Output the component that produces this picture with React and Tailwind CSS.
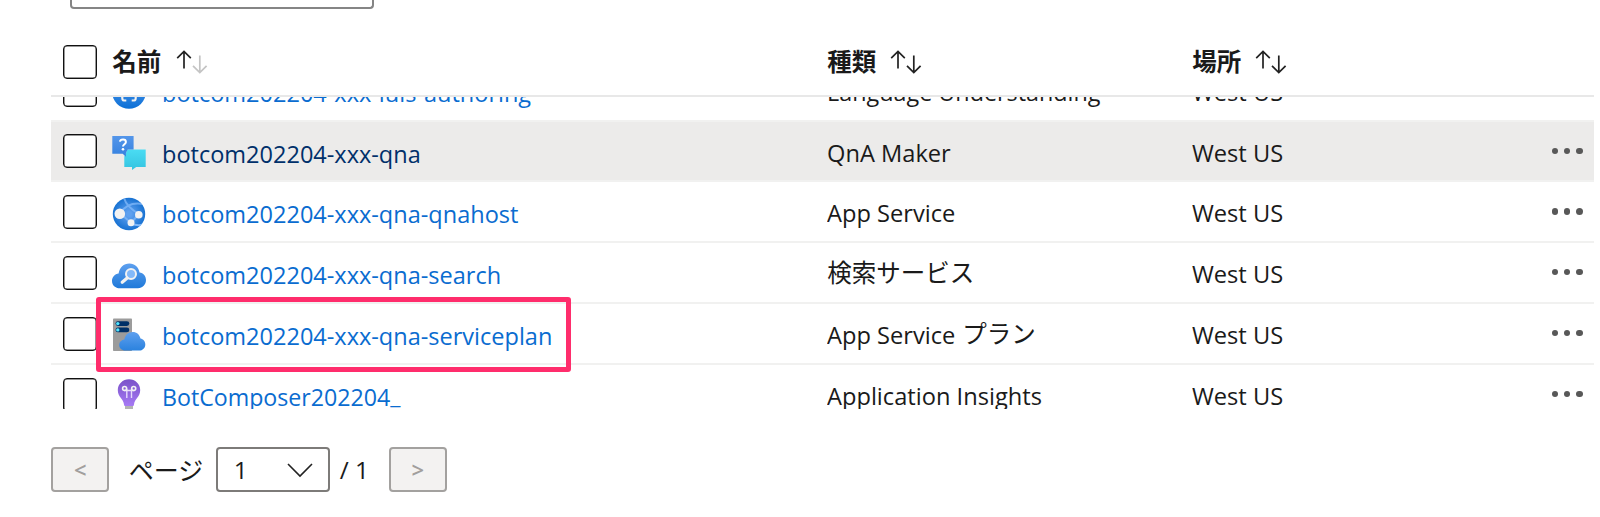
function QnaIcon() {
  return (
    <svg width="34" height="35" viewBox="0 0 34 35">
      <defs>
        <linearGradient id="qa" x1="0" y1="0" x2="0" y2="1"><stop offset="0" stopColor="#5496ea" /><stop offset="1" stopColor="#3581df" /></linearGradient>
        <linearGradient id="qb" x1="0" y1="0" x2="0" y2="1"><stop offset="0" stopColor="#4adcf3" /><stop offset="1" stopColor="#35c3e0" /></linearGradient>
      </defs>
      <path d="M15.500 13.500H33.700v17.600h-9.500L20 34v-2.900h-7.700V20.500z" fill="url(#qb)" />
      <path d="M.3 0h21.300v13.600h-5.900l-1.800 3.400v3.700l-3.200-3H.3z" fill="url(#qa)" />
      <path d="M7.900 5.700c.3-1.700 1.600-2.200 3.100-2.200 1.700 0 2.900.9 2.900 2.400 0 2.300-2.900 2.400-2.900 4.700" fill="none" stroke="#fff" strokeWidth="2" />
      <circle cx="11" cy="13.300" r="1.300" fill="#fff" />
    </svg>
  );
}

function BracesIcon() {
  return (
    <svg width="34" height="34" viewBox="0 0 34 34">
      <defs><linearGradient id="br" x1="0" y1="0" x2="0" y2="1"><stop offset="0" stopColor="#5ea0ef" /><stop offset="1" stopColor="#0b6fd6" /></linearGradient></defs>
      <circle cx="17" cy="17" r="16.800" fill="url(#br)" />
      <path d="M13.800 11c-3 0-3.500 1.500-3.500 4s0 4-2 4c2 0 2 1.500 2 4s.5 2.500 4 2.500M20.200 11c3 0 3.500 1.500 3.500 4s0 4 2 4c-2 0-2 1.500-2 4s-.5 2.500-4 2.500" fill="none" stroke="#f2f2f2" strokeWidth="2.200" />
    </svg>
  );
}

function GlobeIcon() {
  return (
    <svg width="34" height="34" viewBox="0 0 34 34">
      <defs>
        <radialGradient id="gl" cx=".5" cy=".5" r=".5"><stop offset=".15" stopColor="#5ea0ef" /><stop offset="1" stopColor="#1872d2" /></radialGradient>
        <clipPath id="gc"><circle cx="17" cy="17" r="16.200" /></clipPath>
      </defs>
      <circle cx="17" cy="17" r="16.200" fill="url(#gl)" />
      <g clipPath="url(#gc)" fill="none" stroke="#83b9f9" strokeWidth="2">
        <path d="M8 16C13 9 21 5 31 7M12 1c2 7 8 12 15 16M8 16l11 10M19 26l8-9" strokeOpacity=".75" />
        <path d="M19 26.500c5 2 9 2 12 1" />
      </g>
      <circle cx="7.800" cy="16.700" r="5.300" fill="#f2f2f2" />
      <circle cx="26.800" cy="17.700" r="3.800" fill="#f2f2f2" />
      <circle cx="19" cy="25.800" r="3.500" fill="#f2f2f2" />
    </svg>
  );
}

function CloudSearchIcon() {
  return (
    <svg width="34" height="34" viewBox="0 0 34 34">
      <defs><linearGradient id="cs" x1="0" y1="0" x2="0" y2="1"><stop offset="0" stopColor="#5ea0ef" /><stop offset="1" stopColor="#1f79d9" /></linearGradient></defs>
      <path d="M8 30.300C3.300 30.300 0 27.300 0 23c0-3.900 2.900-7 6.600-7.400C7.400 9.500 11.700 5.500 17.400 5.500c5.300 0 9.200 3.500 10.100 8.900 3.900.4 6.500 3.700 6.500 7.700 0 4.600-3.500 8.200-8 8.200z" fill="url(#cs)" />
      <circle cx="19" cy="16" r="5" fill="#83b9f9" stroke="#f2f2f2" strokeWidth="2" />
      <path d="M15.200 20l-5 4.300" stroke="#f2f2f2" strokeWidth="3.200" strokeLinecap="round" />
    </svg>
  );
}

function PlanIcon() {
  return (
    <svg width="34" height="34" viewBox="0 0 34 34">
      <defs><linearGradient id="pl" x1="0" y1="0" x2="0" y2="1"><stop offset="0" stopColor="#5ea0ef" /><stop offset="1" stopColor="#2b82de" /></linearGradient></defs>
      <rect x="1" y=".5" width="19" height="32.500" rx=".8" fill="#9c9c9c" />
      <rect x="3.500" y="3.200" width="13.800" height="4.800" rx="2.400" fill="#003067" />
      <rect x="3.500" y="9.500" width="13.800" height="4.800" rx="2.400" fill="#003067" />
      <circle cx="5.800" cy="5.600" r="1.700" fill="#50e6ff" />
      <circle cx="5.800" cy="11.900" r="1.700" fill="#50e6ff" />
      <path d="M13.300 32.500c-3.500 0-6.100-2.400-6.100-5.500 0-3 2.200-5.200 5.200-5.600.7-4.400 4-7.400 8.300-7.400 4 0 7 2.600 7.800 6.600 2.700.4 4.800 2.800 4.800 5.800 0 3.400-2.700 6.100-6.200 6.100z" fill="url(#pl)" />
    </svg>
  );
}

function BulbIcon() {
  return (
    <svg width="34" height="34" viewBox="0 0 34 34">
      <defs><linearGradient id="bu" x1="0" y1="0" x2="0" y2="1"><stop offset="0" stopColor="#7a52c8" /><stop offset="1" stopColor="#a67af4" /></linearGradient></defs>
      <path d="M17 .2C10.700.2 5.800 5 5.800 11c0 7.500 5.700 8.500 6.200 14.500.1 1.200.6 1.500 1.600 1.500h6.800c1 0 1.500-.3 1.600-1.500.5-6 6.200-7 6.200-14.500C28.200 5 23.300.2 17 .2z" fill="url(#bu)" />
      <path d="M14.800 19V9.800M19.500 19V9.800M12 11.500h10.500" stroke="#e6dafc" strokeWidth="1.400" fill="none" />
      <circle cx="12.600" cy="9.500" r="2" fill="none" stroke="#f2f2f2" strokeWidth="1.600" />
      <circle cx="21.700" cy="9.500" r="2" fill="none" stroke="#f2f2f2" strokeWidth="1.600" />
      <path d="M13 27h8v4l-2 3h-4l-2-3z" fill="#b3b3b3" />
    </svg>
  );
}

function Sort({ dim }) {
  return (
    <svg className={`mt-[5px] shrink-0 ${dim ? "ml-[15px]" : "ml-[14px]"}`} width="32" height="26" viewBox="0 0 32 26" fill="none" strokeWidth="1.700">
      <path d="M8 19.500V2.500M1.200 9.200L8 2.400l6.800 6.800" stroke="#222" />
      <path d="M23.800 6.500v17M17 16.800l6.800 6.800 6.800-6.800" stroke={dim ? "#c4c4c4" : "#222"} />
    </svg>
  );
}

function Checkbox() {
  return <span className="block size-[34px] shrink-0 rounded-[4px] border-[1.5px] border-[#111] bg-white shadow-[inset_0_0_0_0.5px_#333]" />;
}

const rows = [
  { name: "botcom202204-xxx-luis-authoring", type: "Language Understanding", icon: <BracesIcon />, typeScale: "scale-x-[0.953]" },
  { name: "botcom202204-xxx-qna", type: "QnA Maker", icon: <QnaIcon />, dots: true, active: true },
  { name: "botcom202204-xxx-qna-qnahost", type: "App Service", icon: <GlobeIcon />, dots: true },
  { name: "botcom202204-xxx-qna-search", type: "検索サービス", jp: true, icon: <CloudSearchIcon />, dots: true },
  { name: "botcom202204-xxx-qna-serviceplan", type: "App Service", suffix: "プラン", icon: <PlanIcon />, dots: true },
  { name: "BotComposer202204", tail: "_", nameScale: "scale-x-[0.946]", type: "Application Insights", icon: <BulbIcon />, dots: true },
];

const GRID = "grid grid-cols-[49px_50px_665px_365px_1fr_56px]";

function Row({ row }) {
  return (
    <div className={`${GRID} h-[60.85px] border-b-2 border-[#f1f1f0] pl-[12px] ${row.active ? "bg-[#ecebea]" : "bg-white"}`}>
      <div className="pt-[12.6px]"><Checkbox /></div>
      <div className="pt-[14.4px]">{row.icon}</div>
      <div className={`pt-[14px] leading-[36px] ${row.active ? "text-[#00306a]" : "text-[#0a6cd0]"}`}>
        <span className={`inline-block origin-left whitespace-nowrap ${row.nameScale || "scale-x-[0.96]"}`}>
          {row.name}
          {row.tail && <span className="relative -top-[2px]">{row.tail}</span>}
        </span>
      </div>
      <div className="flex pt-[13px] leading-[36px]">
        {row.jp ? (
          <span className="-mt-px whitespace-nowrap">{row.type}</span>
        ) : (
          <span className={`inline-block origin-left whitespace-nowrap ${row.typeScale || "scale-x-[0.965]"}`}>{row.type}</span>
        )}
        {row.suffix && <span className="-mt-px ml-[2px]">{row.suffix}</span>}
      </div>
      <div className="pt-[13px] leading-[36px]">
        <span className="inline-block origin-left scale-x-[0.965] whitespace-nowrap">West US</span>
      </div>
      <div className="flex gap-[6px] pt-[26px] pl-[14px]">
        {row.dots && [0, 1, 2].map((d) => <span key={d} className="size-[6.2px] rounded-full bg-[#585858]" />)}
      </div>
    </div>
  );
}

function Heading({ children, dim }) {
  return (
    <div className="-mt-px flex">
      <span className="leading-[36px] font-semibold">{children}</span>
      <Sort dim={dim} />
    </div>
  );
}

function PageButton({ children }) {
  return (
    <button className="flex h-[45px] w-[58px] items-center justify-center rounded-[4px] border-2 border-[#a3a19f] bg-[#f3f2f1] pb-px text-[22px] font-semibold text-[#a19f9d]">
      {children}
    </button>
  );
}

export default function App() {
  return (
    <div className="relative h-[517px] w-[1600px] overflow-hidden bg-white font-['Open_Sans','Noto_Sans_CJK_JP',sans-serif] text-[24.5px] text-[#1a1a1a]">
      <div className="ml-[70px] h-[9px] w-[304px] rounded-b-[4px] border-2 border-t-0 border-[#858585]" />
      <div className="ml-[51.2px] w-[1542.8px]">
        <div className={`${GRID} h-[88px] border-b-2 border-[#e8e8e8] pt-[36px] pl-[12px]`}>
          <Checkbox />
          <div className="col-span-2"><Heading dim>名前</Heading></div>
          <Heading>種類</Heading>
          <Heading>場所</Heading>
        </div>
        <div className="h-[311.5px] overflow-hidden">
          <div className="-mt-[36.3px]">
            {rows.map((r) => <Row key={r.name} row={r} />)}
          </div>
        </div>
        <div className="mt-[38.5px] flex h-[45px] items-center">
          <PageButton>&lt;</PageButton>
          <span className="mt-0.5 ml-[19.5px] w-[87px] text-[25px] whitespace-nowrap">ページ</span>
          <div className="flex h-[45px] w-[114px] items-center justify-between rounded-[4px] border-2 border-[#7d7b79] pr-[15px] pl-[16px]">
            <span className="mt-0.5">1</span>
            <svg width="26" height="16" viewBox="0 0 26 16" fill="none" stroke="#222" strokeWidth="1.600"><path d="M1 2l12 12L25 2" /></svg>
          </div>
          <span className="mt-0.5 ml-[10px] w-[49px] whitespace-nowrap">/ 1</span>
          <PageButton>&gt;</PageButton>
        </div>
      </div>
      <div className="absolute top-[297px] left-[96px] h-[75px] w-[475px] rounded-[3px] border-[5px] border-[#ff2d6c]" />
    </div>
  );
}
